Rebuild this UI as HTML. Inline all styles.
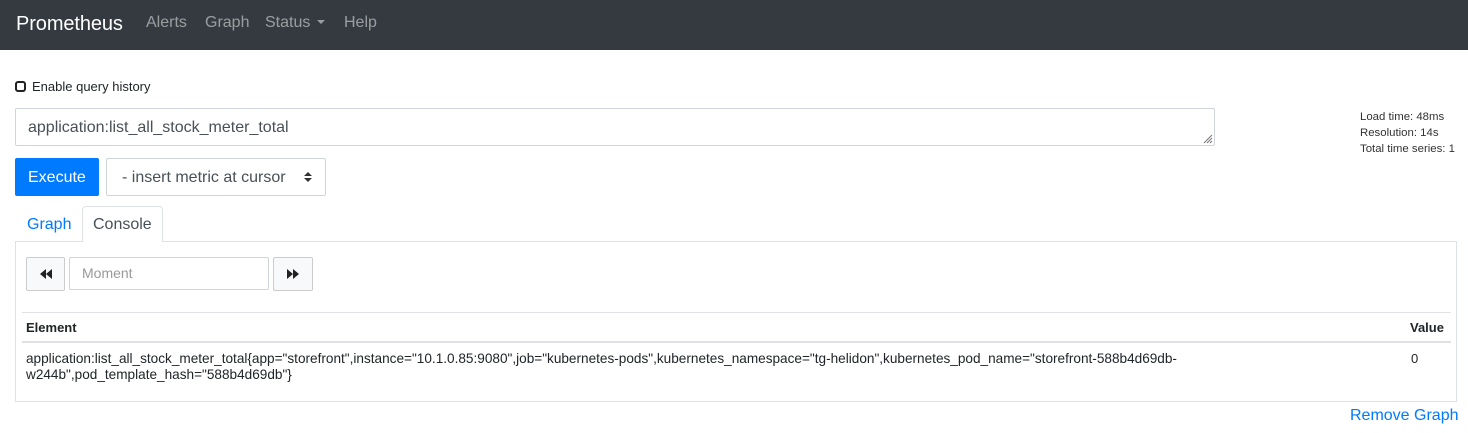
<!DOCTYPE html>
<html><head><style>
*{box-sizing:border-box;margin:0;padding:0}
body{width:1468px;height:433px;background:#fff;font-family:"Liberation Sans",Arial,sans-serif;color:#212529;position:relative;overflow:hidden}
.a{position:absolute;white-space:nowrap}
</style></head><body>
<div class="a" style="left:0;top:0;width:1468px;height:50px;background:#343a40"></div>
<div class="a" style="left:16px;top:12px;font-size:20px;line-height:24px;color:#fff;letter-spacing:-0.1px">Prometheus</div>
<div class="a" style="left:146px;top:13px;font-size:16px;line-height:20px;color:rgba(255,255,255,.5)">Alerts</div>
<div class="a" style="left:205px;top:13px;font-size:16px;line-height:20px;color:rgba(255,255,255,.5)">Graph</div>
<div class="a" style="left:265px;top:13px;font-size:16px;line-height:20px;color:rgba(255,255,255,.5)">Status <span style="display:inline-block;width:0;height:0;border-left:4px solid transparent;border-right:4px solid transparent;border-top:4px solid rgba(255,255,255,.5);vertical-align:3px;margin-left:2px"></span></div>
<div class="a" style="left:344px;top:13px;font-size:16px;line-height:20px;color:rgba(255,255,255,.5)">Help</div>

<div class="a" style="left:15px;top:81px;width:11px;height:11px;border:2px solid #222;border-radius:3px"></div>
<div class="a" style="left:32px;top:79px;font-size:13px;line-height:16px">Enable query history</div>

<div class="a" style="left:15px;top:108px;width:1200px;height:38px;border:1px solid #ced4da;border-radius:2px"></div>
<div class="a" style="left:28px;top:118px;font-size:16px;line-height:20px;color:#495057">application:list_all_stock_meter_total</div>
<svg class="a" style="left:1201px;top:132px" width="12" height="12"><path d="M11 3L3 11M11 6L6 11M11 9L9 11" stroke="#777" stroke-width="1"/></svg>

<div class="a" style="left:15px;top:158px;width:84px;height:38px;background:#007bff;border-radius:2px"></div>
<div class="a" style="left:28px;top:168px;font-size:16px;line-height:20px;color:#fff">Execute</div>
<div class="a" style="left:106px;top:158px;width:220px;height:38px;border:1px solid #ced4da;border-radius:2px"></div>
<div class="a" style="left:122px;top:168px;font-size:16px;line-height:20px;color:#495057">- insert metric at cursor</div>
<svg class="a" style="left:304px;top:171px" width="8" height="12"><path d="M0 5L4 1L8 5ZM0 7L4 11L8 7Z" fill="#333"/></svg>

<div class="a" style="left:1360px;top:109px;font-size:11.4px;line-height:16px;color:#333">Load time: 48ms<br>Resolution: 14s<br>Total time series: 1</div>

<div class="a" style="left:15px;top:241px;width:1442px;height:161px;border:1px solid #dee2e6"></div>
<div class="a" style="left:82px;top:206px;width:81px;height:36px;border:1px solid #dee2e6;border-bottom:none;border-radius:4px 4px 0 0;background:#fff"></div>
<div class="a" style="left:27px;top:215px;font-size:16px;line-height:20px;color:#007bff">Graph</div>
<div class="a" style="left:93px;top:215px;font-size:16px;line-height:20px;color:#495057">Console</div>

<div class="a" style="left:26px;top:257px;width:39px;height:34px;border:1px solid #ccc;background:#f8f9fa;border-radius:2px"></div>
<svg class="a" style="left:40px;top:269px" width="12" height="10"><path d="M6 0L0 5L6 10ZM12 0L6 5L12 10Z" fill="#222"/></svg>
<div class="a" style="left:69px;top:257px;width:200px;height:33px;border:1px solid #ced4da;border-radius:2px"></div>
<div class="a" style="left:82px;top:265px;font-size:14px;line-height:17px;color:#999">Moment</div>
<div class="a" style="left:273px;top:257px;width:40px;height:34px;border:1px solid #ccc;background:#f8f9fa;border-radius:2px"></div>
<svg class="a" style="left:287px;top:269px" width="12" height="10"><path d="M0 0L6 5L0 10ZM6 0L12 5L6 10Z" fill="#222"/></svg>

<div class="a" style="left:22px;top:312px;width:1429px;height:1px;background:#dee2e6"></div>
<div class="a" style="left:26px;top:320px;font-size:13px;line-height:16px;font-weight:bold">Element</div>
<div class="a" style="left:1410px;top:320px;font-size:13px;line-height:16px;font-weight:bold">Value</div>
<div class="a" style="left:22px;top:341px;width:1429px;height:2px;background:#dee2e6"></div>
<div class="a" style="left:26px;top:351px;font-size:13.6px;line-height:15.5px">application:list_all_stock_meter_total{app="storefront",instance="10.1.0.85:9080",job="kubernetes-pods",kubernetes_namespace="tg-helidon",kubernetes_pod_name="storefront-588b4d69db-<br>w244b",pod_template_hash="588b4d69db"}</div>
<div class="a" style="left:1411px;top:351px;font-size:13px;line-height:16px">0</div>

<div class="a" style="left:1350px;top:406px;font-size:16px;line-height:20px;color:#007bff">Remove Graph</div>
</body></html>
